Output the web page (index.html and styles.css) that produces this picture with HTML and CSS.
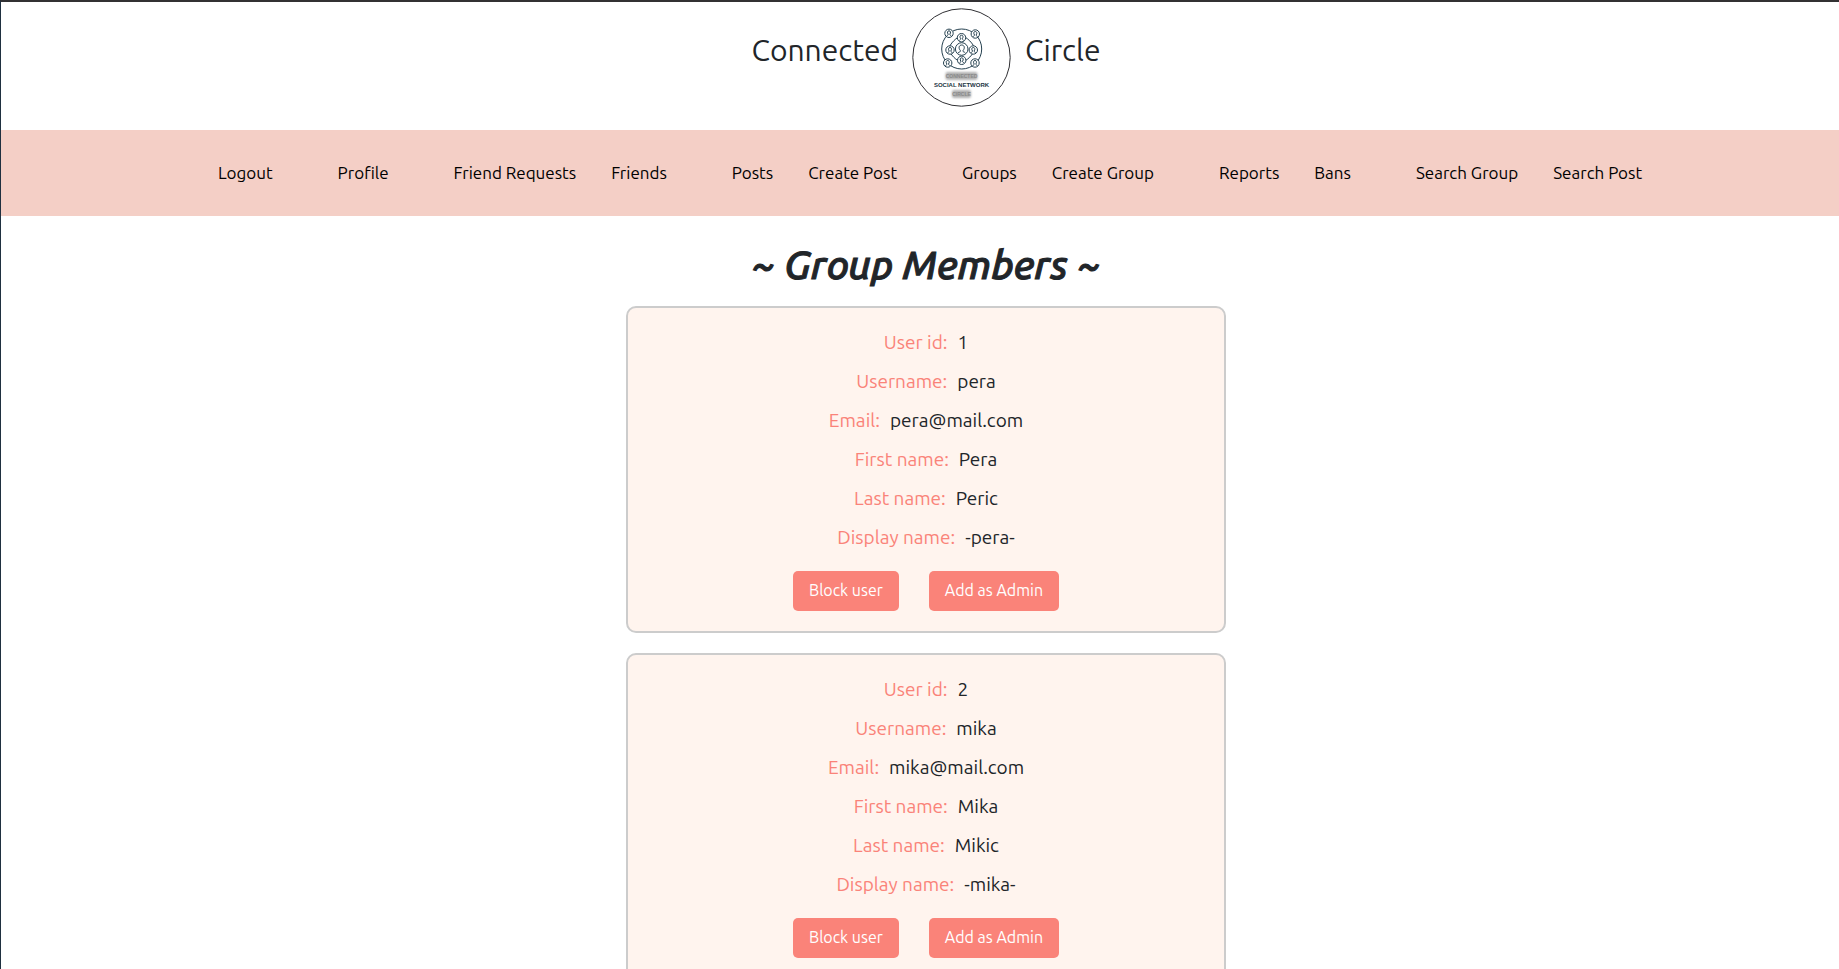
FILE: index.html
```html
<!DOCTYPE html>
<html lang="en">
<head>
<meta charset="utf-8">
<title>Connected Circle</title>
<link rel="stylesheet" href="styles.css">
</head>
<body>
<header class="brand">
  <span>Connected</span>
  <svg class="logo" viewBox="0 0 99 99" role="img" aria-label="Connected Circle logo">
    <defs>
      <filter id="soft" x="-20%" y="-40%" width="140%" height="180%"><feGaussianBlur stdDeviation="1"/></filter>
      <g id="person">
        <circle r="4.2" fill="#fff"/>
        <path d="M-2.3 2.8C-1.8 1.8-.7 1.9-.8 1-2.1-.8-1.5-2.5 0-2.5S2.1-.8.8 1C.7 1.9 1.8 1.8 2.3 2.8" fill="none"/>
      </g>
    </defs>
    <circle cx="49.5" cy="49.5" r="48.7" fill="#fff" stroke="#303034"/>
    <g fill="none" stroke="#24404f">
      <circle cx="49.7" cy="41" r="20"/>
      <path d="M49.7 28C54 28 62.5 36.5 62.5 41S54 54 49.7 54 37 45.5 37 41 45.4 28 49.7 28Z"/>
      <circle cx="49.7" cy="41" r="6.3" fill="#fff"/>
      <path d="M46 45c1-1.4 2.8-.8 2.4-2.4-2.3-2.6-1.3-5.6 1.3-5.6s3.6 3 1.3 5.6c-.4 1.6 1.4 1 2.4 2.4"/>
      <use href="#person" x="37" y="25.3"/>
      <use href="#person" x="63.3" y="26"/>
      <use href="#person" x="49.5" y="29.7"/>
      <use href="#person" x="38" y="42"/>
      <use href="#person" x="61.3" y="42"/>
      <use href="#person" x="49.7" y="52.3"/>
      <use href="#person" x="35.7" y="55"/>
      <use href="#person" x="63" y="55"/>
    </g>
    <g fill="#b0b0b0" filter="url(#soft)">
      <rect x="33.5" y="64" width="32" height="8" rx="2"/>
      <rect x="40" y="82" width="19" height="8" rx="2"/>
    </g>
    <g class="logo-text" text-anchor="middle">
      <text class="logo-faint" x="49.5" y="70">CONNECTED</text>
      <text class="logo-main" x="49.5" y="79">SOCIAL NETWORK</text>
      <text class="logo-faint" x="49.5" y="88">CIRCLE</text>
    </g>
  </svg>
  <span>Circle</span>
</header>
<nav class="menu">
  <ul class="menu-group"><li><a href="#">Logout</a></li></ul>
  <ul class="menu-group"><li><a href="#">Profile</a></li></ul>
  <ul class="menu-group"><li><a href="#">Friend Requests</a></li><li><a href="#">Friends</a></li></ul>
  <ul class="menu-group"><li><a href="#">Posts</a></li><li><a href="#">Create Post</a></li></ul>
  <ul class="menu-group"><li><a href="#">Groups</a></li><li><a href="#">Create Group</a></li></ul>
  <ul class="menu-group"><li><a href="#">Reports</a></li><li><a href="#">Bans</a></li></ul>
  <ul class="menu-group"><li><a href="#">Search Group</a></li><li><a href="#">Search Post</a></li></ul>
</nav>
<main class="members">
  <h1 class="title">~ Group Members ~</h1>
  <section class="card">
    <dl class="details">
      <div class="row"><dt>User id:</dt><dd>1</dd></div>
      <div class="row"><dt>Username:</dt><dd>pera</dd></div>
      <div class="row"><dt>Email:</dt><dd>pera@mail.com</dd></div>
      <div class="row"><dt>First name:</dt><dd>Pera</dd></div>
      <div class="row"><dt>Last name:</dt><dd>Peric</dd></div>
      <div class="row"><dt>Display name:</dt><dd>-pera-</dd></div>
    </dl>
    <div class="actions">
      <button class="btn" type="button">Block user</button>
      <button class="btn" type="button">Add as Admin</button>
    </div>
  </section>
  <section class="card">
    <dl class="details">
      <div class="row"><dt>User id:</dt><dd>2</dd></div>
      <div class="row"><dt>Username:</dt><dd>mika</dd></div>
      <div class="row"><dt>Email:</dt><dd>mika@mail.com</dd></div>
      <div class="row"><dt>First name:</dt><dd>Mika</dd></div>
      <div class="row"><dt>Last name:</dt><dd>Mikic</dd></div>
      <div class="row"><dt>Display name:</dt><dd>-mika-</dd></div>
    </dl>
    <div class="actions">
      <button class="btn" type="button">Block user</button>
      <button class="btn" type="button">Add as Admin</button>
    </div>
  </section>
</main>
</body>
</html>
```
FILE: styles.css
```css
* {
  box-sizing: border-box;
}

html {
  height: 100%;
  overflow: hidden;
}

body {
  margin: 0;
  min-height: 100%;
  border-top: 2px solid #323133;
  border-left: 1px solid #1f3040;
  background: #fff;
  color: #212529;
  font-family: Ubuntu, "Noto Sans", sans-serif;
  font-size: 16px;
  line-height: 24px;
}

.brand {
  display: flex;
  justify-content: center;
  gap: 14px;
  padding: 6px 0 23px 12px;
  font-size: 30px;
  line-height: 84px;
}

.logo {
  width: 99px;
  height: 99px;
}

.logo-text {
  font-family: "Liberation Sans", sans-serif;
  font-weight: 700;
}

.logo-main {
  font-size: 6px;
  fill: #1c3442;
}

.logo-faint {
  font-size: 5px;
  fill: #8a8a8a;
}

.menu {
  display: flex;
  justify-content: center;
  gap: 65px;
  padding: 31px 0 31px 20px;
  background: #f4cfc6;
  font-size: 17px;
}

.menu-group {
  display: flex;
  gap: 35px;
  margin: 0;
  padding: 0;
  list-style: none;
}

.menu a {
  color: #000;
  text-decoration: none;
}

.members {
  display: flex;
  flex-direction: column;
  align-items: center;
  gap: 16px;
  padding: 24px 0 24px 12px;
}

.title {
  margin: 0;
  font-size: 40px;
  font-style: italic;
  font-weight: 500;
  line-height: 50px;
  -webkit-text-stroke: 1px currentColor;
}

.card {
  width: 100%;
  max-width: 600px;
  padding: 20px;
  border: 2px solid #ccc;
  border-radius: 10px;
  background: #fff4ee;
}

.card + .card {
  margin-top: 4px;
}

.details {
  display: flex;
  flex-direction: column;
  gap: 10px;
  margin: 0 0 19px;
  font-size: 19px;
  line-height: 29px;
}

.row {
  display: flex;
  justify-content: center;
  gap: 10px;
}

.row dt {
  color: #fa8379;
}

.row dd {
  margin: 0;
}

.actions {
  display: flex;
  justify-content: center;
  gap: 30px;
}

.btn {
  padding: 7px 16px 9px;
  border: 0;
  border-radius: 5px;
  background: #fa8379;
  color: #fff;
  font-family: inherit;
  font-size: 16px;
  line-height: 24px;
}
```
